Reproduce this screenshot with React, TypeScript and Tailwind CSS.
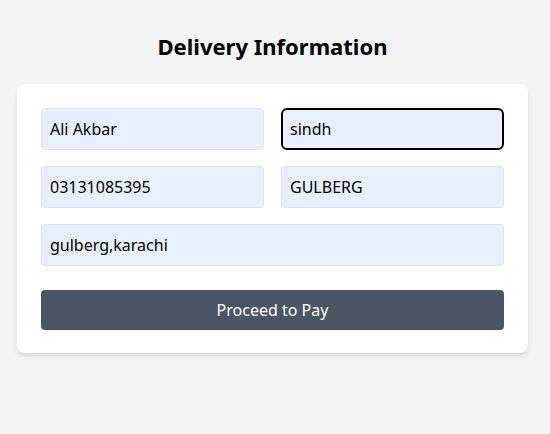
import React from 'react';

const fieldClass =
  "h-[42px] w-full rounded border border-[#dfe3ea] bg-[#e8f0fe] px-2 text-base text-black outline-none"

export default function App() {
  return (
    <div className="min-h-[434px] bg-gray-100 pt-[30px] font-['Noto_Sans',_'Open_Sans',_sans-serif]">
      <div className="ml-[17px] w-[511px]">
        <h2 className="mb-[22px] text-center text-[22px] font-bold leading-8 text-black">Delivery Information</h2>
        <form className="rounded-lg bg-white px-6 pt-6 pb-[23px] shadow-md">
          <div className="grid grid-cols-2 gap-x-[17px] gap-y-4">
            <input className={fieldClass} defaultValue="Ali Akbar" />
            <input className="h-[42px] w-full rounded-md border-2 border-black bg-[#e8f0fe] px-[7px] text-base text-black outline-none" defaultValue="sindh" />
            <input className={fieldClass} defaultValue="03131085395" />
            <input className={fieldClass} defaultValue="GULBERG" />
            <input className={fieldClass + " col-span-2"} defaultValue="gulberg,karachi" />
          </div>
          <button type="button" className="mt-6 h-10 w-full rounded bg-gray-600 text-base text-white">
            Proceed to Pay
          </button>
        </form>
      </div>
    </div>
  )
}
